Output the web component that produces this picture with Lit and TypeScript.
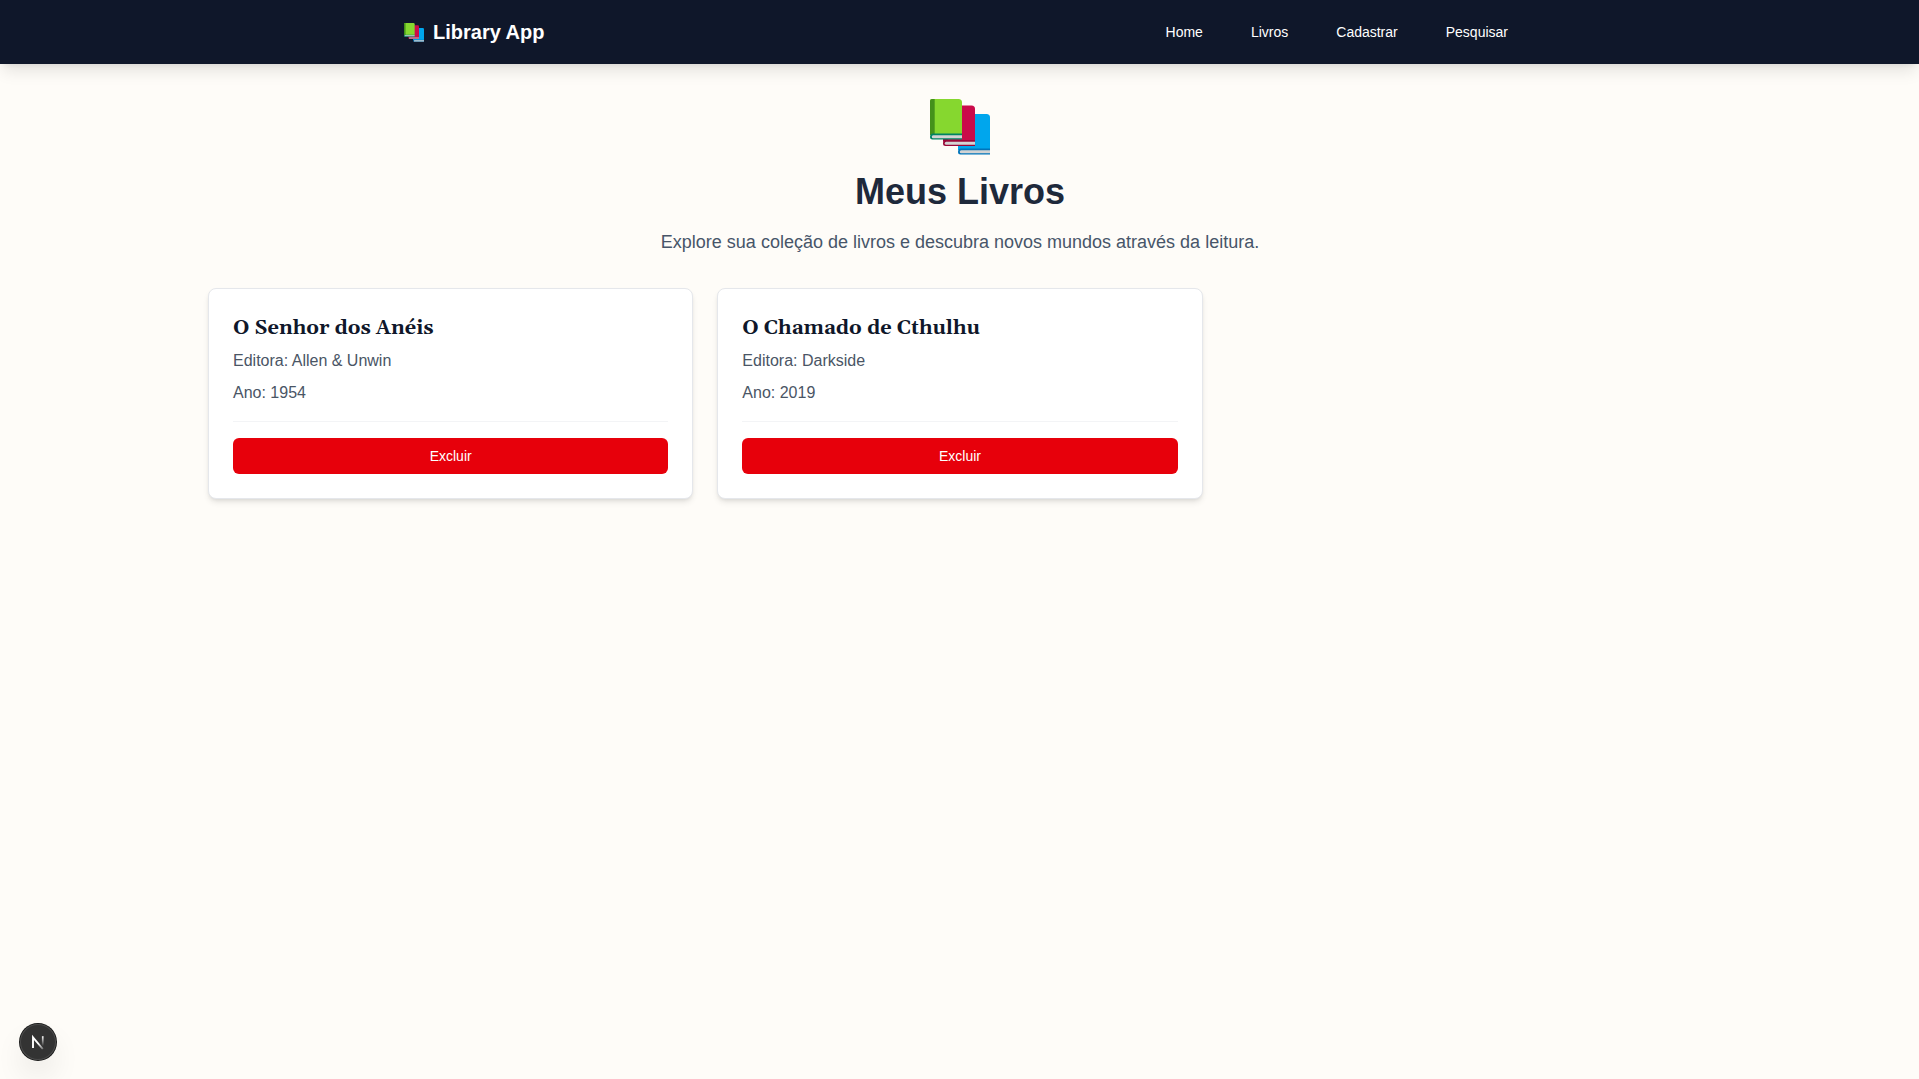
import { LitElement, html, css, svg } from "lit";
import { customElement, property } from "lit/decorators.js";

interface Book {
  title: string;
  publisher: string;
  year: number;
}

const BOOKS: Book[] = [
  { title: "O Senhor dos Anéis", publisher: "Allen & Unwin", year: 1954 },
  { title: "O Chamado de Cthulhu", publisher: "Darkside", year: 2019 },
];

const LINKS = ["Home", "Livros", "Cadastrar", "Pesquisar"];

const book = (x: number, y: number, cover: string, spine: string, base: string) => svg`
  <g transform="translate(${x} ${y})">
    <path fill=${cover} d="M2 0H28.5Q32 0 32 3.5V36H0V2Q0 0 2 0Z" />
    <path fill=${spine} d="M2 0H4.7V36H0V2Q0 0 2 0Z" />
    <path fill=${base} d="M3 34.5H32V40.5H2.5Q0 40.5 0 38Q0 34.5 3 34.5Z" />
    <path fill="#d3d3d3" d="M3.2 36.2H32V39.2H3.2Q1.8 39.2 1.8 37.7Q1.8 36.2 3.2 36.2Z" />
  </g>`;

@customElement("books-icon")
export class BooksIcon extends LitElement {
  static styles = css`
    :host { display: block; }
    .art { display: block; width: 100%; height: 100%; }
  `;
  render() {
    return html`<svg class="art" viewBox="0 0 60 56" preserveAspectRatio="none">
      ${book(28, 15, "#00a6ed", "#00a6ed", "#0074ba")}
      ${book(13, 6.5, "#ca0b4a", "#990838", "#990838")}
      ${book(0, 0, "#86d72f", "#44911b", "#008463")}
    </svg>`;
  }
}

@customElement("book-card")
export class BookCard extends LitElement {
  @property({ attribute: false }) book!: Book;

  static styles = css`
    :host { display: block; min-width: 0; }
    .card {
      box-sizing: border-box;
      padding: 24px;
      background: #fff;
      border: 1px solid #e5e7eb;
      border-radius: 8px;
      box-shadow: 0 4px 6px -1px rgb(0 0 0 / 0.1), 0 2px 4px -2px rgb(0 0 0 / 0.1);
    }
    .title {
      margin: 0;
      padding: 1px 0 7px;
      font: 700 20px/28px Gelasio, Georgia, "Liberation Serif", serif;
      color: #0f172a;
    }
    .line { margin: 0; font-size: 16px; line-height: 24px; color: #4a5565; }
    .line + .line { margin-top: 8px; }
    .actions { margin-top: 16px; padding-top: 16px; border-top: 1px solid #f3f4f6; }
    .remove {
      display: block;
      width: 100%;
      height: 36px;
      padding: 0;
      border: 0;
      border-radius: 6px;
      background: #e7000b;
      color: #fff;
      font: 400 14px/20px "Liberation Sans", Arial, sans-serif;
    }
  `;
  render() {
    return html`<article class="card">
      <h2 class="title">${this.book.title}</h2>
      <p class="line">Editora: ${this.book.publisher}</p>
      <p class="line">Ano: ${this.book.year}</p>
      <div class="actions"><button class="remove">Excluir</button></div>
    </article>`;
  }
}

@customElement("app-root")
export class AppRoot extends LitElement {
  static styles = css`
    :host {
      display: block;
      min-height: 100vh;
      background: #fefcf8;
      font-family: "Liberation Sans", Arial, sans-serif;
    }
    .header {
      display: flex;
      align-items: center;
      justify-content: space-between;
      box-sizing: border-box;
      height: 64px;
      padding: 0 411px 0 404px;
      background: #0f172a;
      color: #fff;
      box-shadow: 0 10px 15px -3px rgb(0 0 0 / 0.1), 0 4px 6px -4px rgb(0 0 0 / 0.1);
    }
    .brand {
      display: flex;
      align-items: center;
      gap: 9px;
      font-size: 20px;
      font-weight: 700;
      line-height: 28px;
    }
    .brand-icon { width: 20px; height: 19px; }
    .nav { display: flex; gap: 48px; font-size: 14px; line-height: 20px; }
    .link { color: #fff; text-decoration: none; }
    .main { padding-left: 1px; }
    .intro { display: flex; flex-direction: column; align-items: center; padding-top: 35px; }
    .intro-icon { width: 60px; height: 56px; }
    .heading {
      margin: 17px 0 0;
      font-size: 36px;
      line-height: 40px;
      color: #1e293b;
    }
    .subtitle { margin: 16px 0 0; font-size: 18px; line-height: 28px; color: #475569; }
    .grid {
      display: grid;
      grid-template-columns: repeat(3, 1fr);
      gap: 24px;
      box-sizing: border-box;
      max-width: 1536px;
      margin: 32px auto 0;
      padding: 0 16px;
    }
    .badge {
      position: fixed;
      left: 20px;
      bottom: 19px;
      width: 36px;
      height: 36px;
      border-radius: 50%;
      background: #333;
      box-shadow: 0 0 0 1px #171717, inset 0 0 0 1px #4b4b4b, 0 16px 32px -8px rgb(0 0 0 / 0.24);
    }
    .badge-mark { display: block; width: 36px; height: 36px; }
  `;
  render() {
    return html`
      <header class="header">
        <div class="brand"><books-icon class="brand-icon"></books-icon><span>Library App</span></div>
        <nav class="nav">${LINKS.map((l) => html`<a class="link">${l}</a>`)}</nav>
      </header>
      <main class="main">
        <section class="intro">
          <books-icon class="intro-icon"></books-icon>
          <h1 class="heading">Meus Livros</h1>
          <p class="subtitle">Explore sua coleção de livros e descubra novos mundos através da leitura.</p>
        </section>
        <section class="grid">
          ${BOOKS.map((b) => html`<book-card .book=${b}></book-card>`)}
        </section>
      </main>
      <div class="badge">
        <svg class="badge-mark" viewBox="0 0 36 36" fill="none" stroke-width="1.9">
          <defs>
            <linearGradient id="diag" gradientUnits="userSpaceOnUse" x1="19" y1="19" x2="25" y2="26">
              <stop stop-color="#fff" /><stop offset="1" stop-color="#fff" stop-opacity="0.1" />
            </linearGradient>
            <linearGradient id="stem" gradientUnits="userSpaceOnUse" x1="0" y1="12" x2="0" y2="22">
              <stop stop-color="#fff" /><stop offset="1" stop-color="#fff" stop-opacity="0" />
            </linearGradient>
          </defs>
          <path stroke="url(#diag)" d="M13 24V13.4L22.8 25" />
          <path fill="url(#stem)" d="M21.9 12.2H23.6V22H21.9Z" />
        </svg>
      </div>
    `;
  }
}
